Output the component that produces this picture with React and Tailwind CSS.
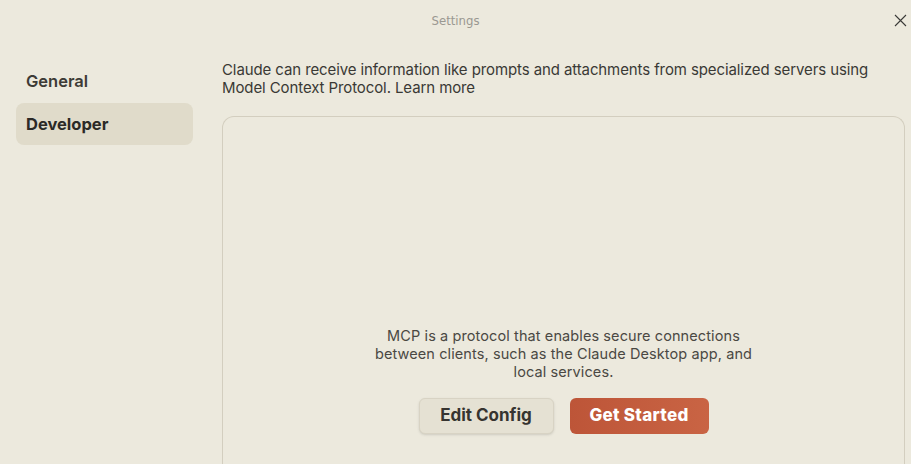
import React from "react";

export default function App() {
  return (
    <div className="w-[911px] h-[464px] overflow-hidden bg-[#ece9dd] flex flex-col" style={{ fontFamily: "Inter, 'Noto Sans', sans-serif" }}>
      <div className="relative h-[41px] shrink-0 flex items-center justify-center">
        <span className="text-[13px] text-[#9a9891]" style={{ fontFamily: "'DejaVu Sans Condensed', 'Liberation Sans', sans-serif" }}>Settings</span>
        <svg className="absolute right-[4px] top-[14px]" width="13" height="13" viewBox="0 0 13 13" fill="none" stroke="#3a3a38" strokeWidth="1.1">
          <path d="M1 1 L12 12 M12 1 L1 12" />
        </svg>
      </div>
      <div className="flex flex-1 min-h-0">
        <div className="w-[222px] shrink-0 pl-[16px] pr-[29px] pt-[19px] flex flex-col gap-[1px]">
          <div className="h-[42px] px-[10px] flex items-center text-[16.5px] font-semibold text-[#3d3b36]">General</div>
          <div className="h-[42px] px-[10px] flex items-center text-[16.5px] font-bold text-[#2b2a27] bg-[#e0dbca] rounded-[8px]">Developer</div>
        </div>
        <div className="flex-1 pr-[6px] pt-[20px] flex flex-col min-h-0">
          <p className="text-[15px] leading-[18px] text-[#3a3935] tracking-[-0.1px]">
            Claude can receive information like prompts and attachments from specialized servers using<br />Model Context Protocol. <span>Learn more</span>
          </p>
          <div className="mt-[19px] flex-1 border border-[#d3cebf] rounded-t-[12px] border-b-0 flex flex-col items-center pt-[210px]">
            <p className="text-center text-[14.5px] leading-[18px] text-[#4a4843] tracking-[0.1px]">
              MCP is a protocol that enables secure connections<br />between clients, such as the Claude Desktop app, and<br />local services.
            </p>
            <div className="mt-[17px] flex gap-[16px]">
              <button className="h-[36px] w-[135px] rounded-[6px] bg-[#e5e1d3] border border-[#d8d3c4] shadow-sm text-[17px] font-bold text-[#363430]">Edit Config</button>
              <button className="h-[36px] w-[139px] rounded-[6px] bg-gradient-to-r from-[#bd5538] to-[#c96444] text-[17px] font-extrabold text-white tracking-[0.3px]">Get Started</button>
            </div>
          </div>
        </div>
      </div>
    </div>
  );
}
